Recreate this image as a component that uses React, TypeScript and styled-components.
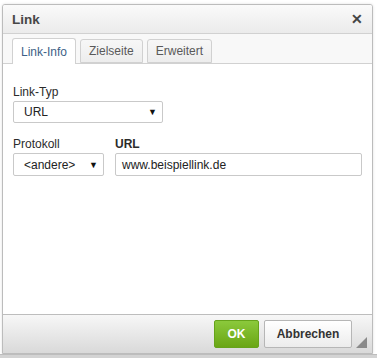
import React from "react";
import styled, { createGlobalStyle } from "styled-components";

const Global = createGlobalStyle`
  html, body { margin: 0; padding: 0; background: #ffffff; }
  body { font-family: "Liberation Sans", Arial, sans-serif; width: 377px; height: 358px; overflow: hidden; }
`;

const Page = styled.div`
  width: 377px;
  height: 358px;
  display: flex;
  flex-direction: column;
  background: #ffffff;
`;

const Stage = styled.div`
  flex: 1;
  display: flex;
  padding: 4px 4px 0 2px;
`;

const BottomBar = styled.div`
  height: 3px;
  background: #d3d3d3;
  border-top: 1px solid #bdbdbd;
`;

const Dialog = styled.div`
  flex: 1;
  display: flex;
  flex-direction: column;
  border: 1px solid #bcbcbc;
  border-radius: 3px 3px 0 0;
  background: #ffffff;
  box-shadow: 0 0 3px rgba(0, 0, 0, 0.12);
  overflow: hidden;
`;

const TitleBar = styled.div`
  height: 28px;
  display: flex;
  align-items: center;
  justify-content: space-between;
  padding: 0 9px 0 9px;
  background: linear-gradient(#fafafa, #ebebeb);
  border-bottom: 1px solid #d1d1d1;
`;

const Title = styled.div`
  font-size: 13.5px;
  font-weight: bold;
  color: #474747;
`;

const Close = styled.div`
  font-size: 14px;
  font-weight: bold;
  color: #444;
  line-height: 1;
`;

const TabStrip = styled.div`
  display: flex;
  align-items: flex-end;
  gap: 4px;
  padding: 4px 9px 0 9px;
  height: 25px;
  background: #f8f8f8;
  border-bottom: 1px solid #d1d1d1;
`;

const Tab = styled.div<{ $active?: boolean }>`
  height: ${(p) => (p.$active ? "26px" : "24px")};
  margin-bottom: ${(p) => (p.$active ? "-1px" : "0")};
  box-sizing: border-box;
  padding: 0 8px;
  display: flex;
  align-items: center;
  font-size: 12px;
  color: ${(p) => (p.$active ? "#3e5f86" : "#595959")};
  background: ${(p) => (p.$active ? "#ffffff" : "linear-gradient(#f7f7f7, #ededed)")};
  border: 1px solid #d1d1d1;
  border-bottom: ${(p) => (p.$active ? "none" : "1px solid #d1d1d1")};
  border-radius: 3px 3px 0 0;
`;

const Body = styled.div`
  flex: 1;
  display: flex;
  flex-direction: column;
  padding: 21px 10px 0 10px;
  gap: 14px;
`;

const Field = styled.div<{ $grow?: boolean }>`
  display: flex;
  flex-direction: column;
  gap: 1px;
  flex: ${(p) => (p.$grow ? 1 : "none")};
`;

const Row = styled.div`
  display: flex;
  gap: 11px;
`;

const Label = styled.div<{ $bold?: boolean }>`
  font-size: 12px;
  color: #2b2b2b;
  font-weight: ${(p) => (p.$bold ? "bold" : "normal")};
  height: 15px;
  line-height: 15px;
`;

const Select = styled.div<{ $w: number; $h: number }>`
  width: ${(p) => p.$w}px;
  height: ${(p) => p.$h}px;
  box-sizing: border-box;
  border: 1px solid #c9c9c9;
  border-radius: 2px;
  background: #fff;
  display: flex;
  align-items: center;
  justify-content: space-between;
  padding: 0 5px 0 10px;
  font-size: 12px;
  color: #222;
`;

const Arrow = styled.span`
  font-size: 9px;
  color: #111;
`;

const Input = styled.div`
  height: 23px;
  box-sizing: border-box;
  border: 1px solid #c9c9c9;
  border-radius: 2px;
  background: #fff;
  display: flex;
  align-items: center;
  padding: 0 6px;
  font-size: 12px;
  color: #222;
`;

const Footer = styled.div`
  height: 38px;
  display: flex;
  align-items: center;
  justify-content: flex-end;
  gap: 5px;
  padding: 0 20px 0 0;
  background: linear-gradient(#f7f7f7, #d9d9d9);
  border-top: 1px solid #bdbdbd;
  position: relative;
`;

const Button = styled.div<{ $primary?: boolean; $w: number }>`
  width: ${(p) => p.$w}px;
  height: 28px;
  box-sizing: border-box;
  display: flex;
  align-items: center;
  justify-content: center;
  font-size: 12px;
  font-weight: bold;
  border-radius: 2px;
  color: ${(p) => (p.$primary ? "#ffffff" : "#333")};
  background: ${(p) => (p.$primary ? "linear-gradient(#8bc93c, #6aa615)" : "linear-gradient(#ffffff, #ececec)")};
  border: 1px solid ${(p) => (p.$primary ? "#66a31b" : "#b6b6b6")};
`;

const Grip = styled.svg`
  position: absolute;
  right: 5px;
  bottom: 5px;
`;

export default function App() {
  return (
    <>
      <Global />
      <Page>
        <Stage>
          <Dialog>
            <TitleBar>
              <Title>Link</Title>
              <Close>✕</Close>
            </TitleBar>
            <TabStrip>
              <Tab $active>Link-Info</Tab>
              <Tab>Zielseite</Tab>
              <Tab>Erweitert</Tab>
            </TabStrip>
            <Body>
              <Field>
                <Label>Link-Typ</Label>
                <Select $w={150} $h={22}>
                  <span>URL</span>
                  <Arrow>▼</Arrow>
                </Select>
              </Field>
              <Row>
                <Field>
                  <Label>Protokoll</Label>
                  <Select $w={91} $h={23}>
                    <span>&lt;andere&gt;</span>
                    <Arrow>▼</Arrow>
                  </Select>
                </Field>
                <Field $grow>
                  <Label $bold>URL</Label>
                  <Input>www.beispiellink.de</Input>
                </Field>
              </Row>
            </Body>
            <Footer>
              <Button $primary $w={45}>OK</Button>
              <Button $w={88}>Abbrechen</Button>
              <Grip width="11" height="11" viewBox="0 0 11 11">
                <polygon points="11,0 11,11 0,11" fill="#8a8a8a" />
              </Grip>
            </Footer>
          </Dialog>
        </Stage>
        <BottomBar />
      </Page>
    </>
  );
}
